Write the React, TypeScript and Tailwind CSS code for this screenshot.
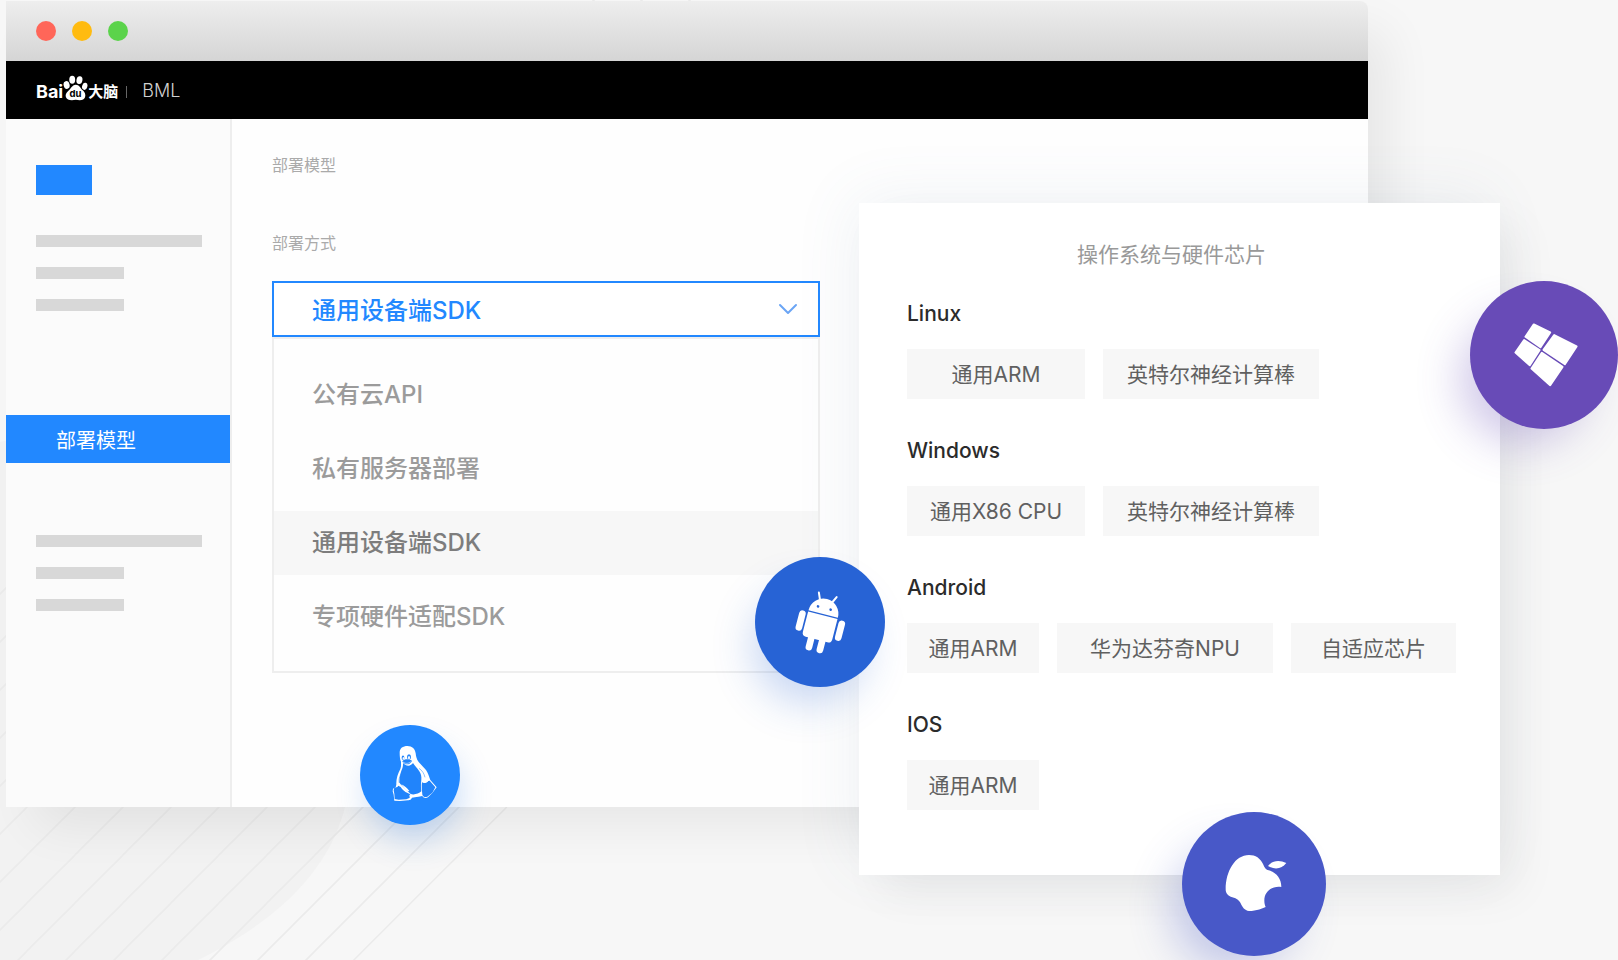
import React, { useState } from 'react';
import { ChevronDown } from 'lucide-react';

const methods = ['公有云API', '私有服务器部署', '通用设备端SDK', '专项硬件适配SDK'];

const platforms = [
  {
    name: 'Linux',
    chips: [
      { label: '通用ARM', width: 'w-[178px]' },
      { label: '英特尔神经计算棒', width: 'w-[216px]' },
    ],
  },
  {
    name: 'Windows',
    chips: [
      { label: '通用X86 CPU', width: 'w-[178px]' },
      { label: '英特尔神经计算棒', width: 'w-[216px]' },
    ],
  },
  {
    name: 'Android',
    chips: [
      { label: '通用ARM', width: 'w-[132px]' },
      { label: '华为达芬奇NPU', width: 'w-[216px]' },
      { label: '自适应芯片', width: 'w-[165px]' },
    ],
  },
  {
    name: 'IOS',
    chips: [{ label: '通用ARM', width: 'w-[132px]' }],
  },
];

function Backdrop() {
  return (
    <svg className="absolute inset-0 w-full h-full" aria-hidden="true">
      <defs>
        <pattern id="stripes" width="48" height="48" patternUnits="userSpaceOnUse" x="27" y="807">
          <path d="M-2 50 50 -2M-2 2 2 -2M46 50l4 -4" stroke="#ebebeb" strokeWidth="1.6" />
        </pattern>
      </defs>
      <path d="M0 442 200 400 345 807C332 860 290 915 198 960H0Z" fill="#f2f2f2" />
      <path d="M0 560 590 0H720L507 808 355 960H0Z" fill="url(#stripes)" />
    </svg>
  );
}

function BaiduLogo() {
  return (
    <div className="flex items-center text-white">
      <span className="text-lg leading-6 font-bold mt-1">Bai</span>
      <svg viewBox="188 220 76 78" className="w-[25px] h-[26px] mb-1" aria-hidden="true">
        <g fill="#fff">
          <ellipse cx="199" cy="250" rx="9" ry="12" transform="rotate(-15 199 250)" />
          <ellipse cx="216" cy="234" rx="9" ry="12" />
          <ellipse cx="238" cy="235" rx="9" ry="12" transform="rotate(12 238 235)" />
          <ellipse cx="254" cy="254" rx="8" ry="11" transform="rotate(15 254 254)" />
          <path d="M227 249c10 0 13 9 20 16 7 6 11 13 8 22-3 9-12 10-28 8-16 2-27 1-30-8-3-9 3-15 9-21 7-7 11-17 21-17Z" />
        </g>
        <text x="226" y="287" textAnchor="middle" fontSize="29" fontWeight="700" fill="#000">du</text>
      </svg>
      <span className="text-[15px] leading-6 font-bold mt-1">大脑</span>
    </div>
  );
}

function PlaceholderLines() {
  return (
    <div className="ml-[30px] space-y-5">
      <div className="h-3 w-[166px] bg-[#d8d8d8]" />
      <div className="h-3 w-[88px] bg-[#d8d8d8]" />
      <div className="h-3 w-[88px] bg-[#d8d8d8]" />
    </div>
  );
}

function LinuxIcon() {
  return (
    <svg viewBox="61 75 300 300" className="w-full h-full" role="img" aria-label="Linux">
      <path
        fill="#fff"
        d="M180 158c0-14 10-20 23-20 15 0 23 9 25 22 1 10 3 18 9 26l22 24c6 9 9 18 11 25l2 5 19 22-13 17-13 13c-6 3-13 3-17-4l-31 5c-4 7-5 6-12 8l-24 2-17-1-2-18-3-10 1-8 8-4 2-8c-1-15 4-33 12-47 3-8 2-14 2-22-3-6-4-17-4-27Z"
      />
      <g fill="#2184fb">
        <path d="M190 189c4 4 9 8 16 8 6 0 11-4 14-8 5 9 13 15 19 25 5 8 7 16 6 26-2 14-1 26 0 34-8 8-25 12-33 7l-30-29-3-5c1-20 5-34 9-42 2-6 2-10 2-16Z" />
        <path d="m176 257 7 4c5 8 12 15 21 18 9 3 11 8 5 15l-9 4-23 1-12-2-1-16-2-10 2-8 9-2Z" />
        <path d="M247 247c5 3 13 3 19-4l4-1 17 20-9 16-15 12c-6 3-13 1-15-6-1-12-3-27-1-37Z" />
      </g>
      <path d="M185 253c9 4 17 11 24 20-8 3-16-10-24-20Z" fill="#fff" />
      <path d="M209 285c12 2 24 0 35-5v8l-34 4Z" fill="#fff" />
      <path d="M248 236c6-4 14-3 17 3-1 9-11 12-16 7-3-3-3-7-1-10Z" fill="#fff" />
      <path d="M188 184c7-8 19-7 29-2-4 8-8 11-14 11-8 0-12-3-15-9Z" fill="#2184fb" />
      <path d="M190 186c8 6 16 5 24-1" fill="none" stroke="#fff" strokeWidth="1.5" />
      <ellipse cx="190" cy="173" rx="4" ry="6.5" fill="#2184fb" />
      <ellipse cx="208" cy="171" rx="6" ry="8" fill="#2184fb" />
      <ellipse cx="191" cy="175" rx="2" ry="4" fill="#fff" />
      <ellipse cx="208" cy="173" rx="3" ry="5" fill="#fff" />
      <path d="M184 221c-6 12-7 21-5 28M238 205c10 7 15 15 18 27" fill="none" stroke="#2184fb" strokeWidth="1.5" />
    </svg>
  );
}

function AndroidIcon() {
  return (
    <svg viewBox="49 52 390 390" className="w-full h-full" role="img" aria-label="Android">
      <g transform="rotate(14.5 247 246)" fill="#fff">
        <path d="M202 222a45 46 0 0 1 91 0Z" />
        <path d="M219 163l9 21M274 163l-9 19" stroke="#fff" strokeWidth="6" strokeLinecap="round" />
        <path d="M202 226h91v63a12 12 0 0 1-12 12h-67a12 12 0 0 1-12-12Z" />
        <rect x="177" y="227" width="20" height="62" rx="10" />
        <rect x="299" y="227" width="20" height="62" rx="10" />
        <rect x="221" y="290" width="20" height="49" rx="10" />
        <rect x="255" y="290" width="20" height="49" rx="10" />
        <circle cx="227" cy="204" r="4" fill="#2763d5" />
        <circle cx="266" cy="204" r="4" fill="#2763d5" />
      </g>
    </svg>
  );
}

function WindowsIcon() {
  return (
    <svg viewBox="92 63 443 443" className="w-full h-full" role="img" aria-label="Windows">
      <g fill="#fff" stroke="#fff" strokeWidth="6" strokeLinejoin="round">
        <path d="M283 193 332 217 303 261 258 230Z" />
        <path d="M344 225 411 259 376 312 312 269Z" />
        <path d="M254 240 300 270 271 315 228 277Z" />
        <path d="M307 278 369 320 332 375 276 325Z" />
      </g>
    </svg>
  );
}

function AppleIcon() {
  return (
    <svg viewBox="126 96 432 432" className="w-full h-full" role="img" aria-label="Apple">
      <g fill="#fff">
        <path d="M327 225c20 0 34 10 42 27 5 11 7 16 17 19 23 7 38 24 38 50-27-4-51 12-51 40 0 8 1 14 4 20-12 6-25 10-42 12-17 1-25-7-31-19-6-13-13-18-27-22-13-4-20-12-20-24 0-54 28-103 70-103Z" />
        <path d="M384 258c13-17 34-19 55-9-13 18-35 21-55 9Z" />
      </g>
    </svg>
  );
}

export default function App() {
  const [method, setMethod] = useState('通用设备端SDK');

  return (
    <div className="relative min-h-screen overflow-hidden bg-[#f7f7f7] pt-px font-['Inter','Noto_Sans_CJK_SC',sans-serif]">
      <Backdrop />

      {/* Browser window */}
      <div className="relative ml-1.5 mr-[250px] rounded-tr-lg shadow-[24px_24px_50px_-6px_rgba(0,0,0,0.07)]">
        <div className="flex items-center gap-4 h-[60px] pl-[30px] rounded-tr-lg bg-linear-to-b from-[#eeeeee] to-[#d5d5d5]">
          <span className="w-5 h-5 rounded-full bg-[#ff6659]" />
          <span className="w-5 h-5 rounded-full bg-[#ffbb10]" />
          <span className="w-5 h-5 rounded-full bg-[#5bd34b]" />
        </div>

        <header className="flex items-center h-[58px] pl-[30px] bg-black">
          <BaiduLogo />
          <span className="w-px h-3 ml-2 mt-1 bg-[#666666]" />
          <span className="ml-[15px] mt-0.5 text-lg leading-6 font-light text-[#d0d0d0]">BML</span>
        </header>

        <div className="flex h-[688px]">
          <aside className="w-[226px] shrink-0 pt-[46px] bg-[#fbfbfb] border-r-2 border-[#eeeeee]">
            <div className="ml-[30px] mb-10 w-14 h-[30px] bg-[#2288ff]" />
            <PlaceholderLines />
            <a
              href="#deploy"
              className="flex items-center h-12 mt-[104px] mb-[72px] pt-1 pl-[50px] bg-[#2288ff] text-white text-xl"
            >
              部署模型
            </a>
            <PlaceholderLines />
          </aside>

          <main className="relative flex-1 bg-[#fefefe] pt-[34px] pl-10">
            <h1 className="text-base leading-6 text-[#aaaaaa]">部署模型</h1>
            <label htmlFor="method" className="block mt-[54px] text-base leading-6 text-[#aaaaaa]">
              部署方式
            </label>

            <div className="w-[548px] mt-[26px] text-2xl font-medium">
              <div className="relative">
                <select
                  id="method"
                  value={method}
                  onChange={(e) => setMethod(e.target.value)}
                  className="block w-full h-14 pl-[38px] pt-1 appearance-none border-2 border-[#2288ff] bg-white text-[#2288ff] outline-none"
                >
                  {methods.map((m) => (
                    <option key={m}>{m}</option>
                  ))}
                </select>
                <ChevronDown
                  className="absolute right-4 top-3 w-8 h-8 text-[#6ba5f5] pointer-events-none"
                  strokeWidth={1.5}
                />
              </div>
              <ul className="h-[336px] pt-6 border-2 border-[#eeeeee]">
                {methods.map((m) => (
                  <li key={m} className="mb-[10px]">
                    <button
                      onClick={() => setMethod(m)}
                      className={
                        m === method
                          ? 'block w-full h-16 pl-[38px] text-left bg-[#f7f7f7] text-[#7d7d7d]'
                          : 'block w-full h-16 pl-[38px] text-left text-[#9b9b9b]'
                      }
                    >
                      {m}
                    </button>
                  </li>
                ))}
              </ul>
            </div>

            <div className="absolute left-32 -bottom-[18px] w-[100px] h-[100px] rounded-full bg-[#2288ff] shadow-[4px_18px_32px_-4px_rgba(34,120,230,0.25)]">
              <LinuxIcon />
            </div>
          </main>
        </div>
      </div>

      {/* Systems and chips panel */}
      <section className="absolute top-[203px] right-[118px] w-[641px] h-[672px] pl-12 pt-9 bg-white shadow-[20px_20px_44px_-4px_rgba(0,0,0,0.06),-8px_-8px_60px_-4px_rgba(90,120,160,0.09)]">
        <h2 className="-ml-12 pl-[218px] text-[21px] leading-8 text-[#999999]">操作系统与硬件芯片</h2>
        <div className="mt-[29px] space-y-[38px]">
          {platforms.map((p) => (
            <div key={p.name}>
              <h3 className="text-[21px] leading-7 font-medium text-[#2b2b2b]">{p.name}</h3>
              <div className="flex gap-[18px] mt-[21px]">
                {p.chips.map((c) => (
                  <button
                    key={c.label}
                    className={`${c.width} h-[50px] pt-0.5 bg-[#f7f7f7] text-[21px] text-[#606060]`}
                  >
                    {c.label}
                  </button>
                ))}
              </div>
            </div>
          ))}
        </div>

        <div className="absolute -left-[104px] top-[354px] w-[130px] h-[130px] rounded-full bg-[#2763d5] shadow-[-10px_24px_40px_-8px_rgba(39,99,213,0.25)]">
          <AndroidIcon />
        </div>
        <div className="absolute -right-[118px] top-[78px] w-[148px] h-[148px] rounded-full bg-[#684bb7] shadow-[-20px_24px_44px_-10px_rgba(104,75,183,0.3)]">
          <WindowsIcon />
        </div>
        <div className="absolute left-[323px] -bottom-[81px] w-36 h-36 rounded-full bg-[#4858c8] shadow-[-20px_24px_44px_-10px_rgba(72,88,200,0.3)]">
          <AppleIcon />
        </div>
      </section>
    </div>
  );
}
